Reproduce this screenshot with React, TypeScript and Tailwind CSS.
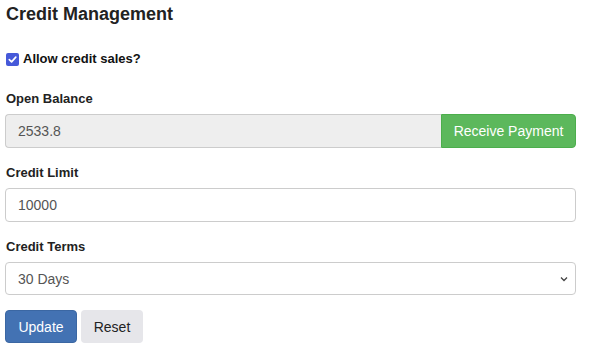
import React from "react";

export default function App() {
  return (
    <div className="w-[598px] h-[351px] bg-white text-[#333] text-[14px] leading-[20px]" style={{ fontFamily: '"Liberation Sans", Arial, sans-serif' }}>
      <div className="pl-[5px] w-[576px] pt-[3px]">
        <h3 className="text-[18px] leading-[22px] font-bold text-[#222] pl-[1px]">Credit Management</h3>
        <label className="flex items-center gap-[4px] mt-[24px] pl-[1px] font-bold text-[13px] text-[#111]">
          <span className="w-[13px] h-[13px] rounded-[2px] bg-[#4659d9] flex items-center justify-center">
            <svg width="11" height="11" viewBox="0 0 12 12"><path d="M2.5 6.2 L5 8.6 L9.6 3.4" stroke="white" strokeWidth="1.8" fill="none" strokeLinecap="round" strokeLinejoin="round" /></svg>
          </span>
          Allow credit sales?
        </label>
        <div className="mt-[20px] font-bold text-[13px] pl-[1px] text-[#222]">Open Balance</div>
        <div className="flex mt-[5px] h-[34px]">
          <div className="flex-1 border border-[#ccc] border-r-0 rounded-l-[4px] bg-[#eee] px-[12px] flex items-center text-[#555]">2533.8</div>
          <button className="w-[135px] bg-[#5cb85c] border border-[#4cae4c] rounded-r-[4px] text-white text-[14px]">Receive Payment</button>
        </div>
        <div className="mt-[15px] font-bold text-[13px] pl-[1px] text-[#222]">Credit Limit</div>
        <div className="mt-[5px] h-[34px] border border-[#ccc] rounded-[4px] px-[12px] flex items-center text-[#555]">10000</div>
        <div className="mt-[15px] font-bold text-[13px] pl-[1px] text-[#222]">Credit Terms</div>
        <div className="mt-[5px] h-[33px] border border-[#ccc] rounded-[4px] pl-[12px] pr-[6px] flex items-center justify-between text-[#555]">
          <span>30 Days</span>
          <svg width="10" height="10" viewBox="0 0 10 10"><path d="M2 3.5 L5 6.5 L8 3.5" stroke="#444" strokeWidth="1.3" fill="none" /></svg>
        </div>
        <div className="flex gap-[4px] mt-[15px]">
          <button className="w-[72px] h-[33px] rounded-[4px] bg-[#4372b3] border border-[#3b67a3] text-white">Update</button>
          <button className="w-[62px] h-[33px] rounded-[4px] bg-[#e6e6ea] text-[#222]">Reset</button>
        </div>
      </div>
    </div>
  );
}
